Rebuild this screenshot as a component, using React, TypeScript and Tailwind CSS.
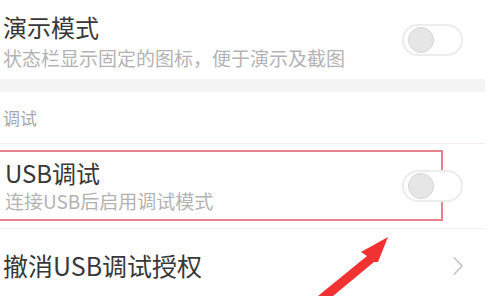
const font = { fontFamily: '"Noto Sans CJK SC", "Noto Sans", sans-serif' };

function Toggle() {
  return (
    <div className="w-[61px] h-[32px] rounded-full border-2 border-[#ececec] bg-white flex items-center pl-[4px]">
      <div className="w-[26px] h-[26px] rounded-full bg-[#e6e6e6] border border-[#d6d6d6]" />
    </div>
  );
}

export default function App() {
  return (
    <div className="relative w-[490px] h-[308px] overflow-hidden bg-white text-[#383838]" style={font}>
      <div className="h-[79px] flex items-center justify-between pl-[3px] pr-[27px]">
        <div className="pt-[4px]">
          <div className="text-[24px] leading-[30px]">演示模式</div>
          <div className="text-[19px] leading-[26px] text-[#b3b3b3] mt-[3px]">状态栏显示固定的图标，便于演示及截图</div>
        </div>
        <Toggle />
      </div>
      <div className="h-[13px] w-[485px] bg-[#f4f4f4]" />
      <div className="h-[52px] flex items-center pl-[3px] text-[17px] text-[#a8a8a8] border-b border-[#f1eded] w-[485px]">
        调试
      </div>
      <div className="h-[85px] border-b border-[#eceff3] w-[485px] pt-[6px]">
        <div className="h-[71px] w-[445px] -ml-[2px] border-2 border-[#e5828b] flex items-center justify-between pl-[5px]">
          <div>
            <div className="text-[24px] leading-[30px]">USB调试</div>
            <div className="text-[19px] leading-[25px] text-[#b3b3b3]">连接USB后启用调试模式</div>
          </div>
          <div className="mr-[-22px]">
            <Toggle />
          </div>
        </div>
      </div>
      <div className="h-[78px] flex items-center justify-between pl-[3px] pr-[26px] pb-[4px]">
        <div className="text-[25px]">撤消USB调试授权</div>
        <svg width="12" height="20" viewBox="0 0 12 20" fill="none">
          <path d="M2 1.5 L10 10 L2 18.5" stroke="#c4c4c4" strokeWidth="1.6" />
        </svg>
      </div>
      <svg className="absolute left-0 top-0" width="490" height="308" viewBox="0 0 490 308">
        <path d="M388 237 L361 252 L367 256 L318 296 L333 296 L374 262 L378 262 Z" fill="#f23232" />
      </svg>
    </div>
  );
}
